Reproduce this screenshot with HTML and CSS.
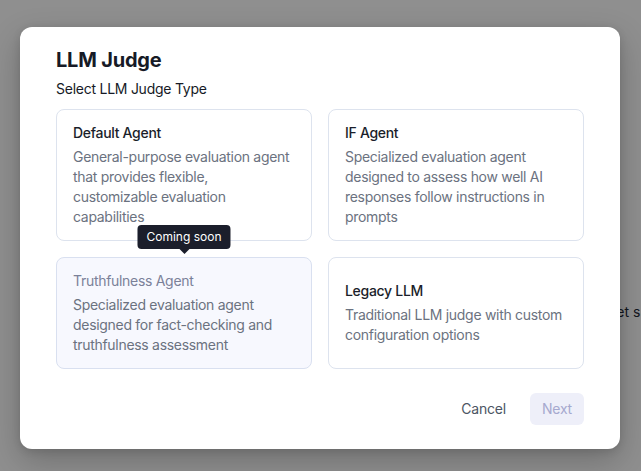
FILE: index.html
```html
<!DOCTYPE html>
<html>
<head>
<meta charset="utf-8">
<link rel="stylesheet" href="styles.css">
</head>
<body>
<div class="page-bg"><span class="bg-text">Reset s</span></div>
<div class="overlay"></div>
<div class="modal">
  <h1 class="modal-title">LLM Judge</h1>
  <p class="modal-sub">Select LLM Judge Type</p>
  <div class="grid">
    <div class="card">
      <div class="card-title">Default Agent</div>
      <div class="card-desc">General-purpose evaluation agent that provides flexible, customizable evaluation capabilities</div>
    </div>
    <div class="card">
      <div class="card-title">IF Agent</div>
      <div class="card-desc">Specialized evaluation agent designed to assess how well AI responses follow instructions in prompts</div>
    </div>
    <div class="card card-disabled">
      <div class="tooltip">Coming soon</div>
      <div class="card-title">Truthfulness Agent</div>
      <div class="card-desc">Specialized evaluation agent designed for fact-checking and truthfulness assessment</div>
    </div>
    <div class="card">
      <div class="card-title">Legacy LLM</div>
      <div class="card-desc">Traditional LLM judge with custom configuration options</div>
    </div>
  </div>
  <div class="footer">
    <button class="btn btn-cancel">Cancel</button>
    <button class="btn btn-next">Next</button>
  </div>
</div>
</body>
</html>
```
FILE: styles.css
```css
html, body {
  margin: 0;
  padding: 0;
  width: 641px;
  height: 471px;
  overflow: hidden;
}
body {
  font-family: "Inter", "Liberation Sans", sans-serif;
  background: #ffffff;
  position: relative;
}
.page-bg {
  position: absolute;
  inset: 0;
}
.bg-text {
  position: absolute;
  left: 592px;
  top: 302px;
  font-size: 14px;
  line-height: 20px;
  color: #1f2937;
}
.overlay {
  position: absolute;
  inset: 0;
  background: rgba(0, 0, 0, 0.44);
}
.modal {
  position: relative;
  z-index: 2;
  box-sizing: border-box;
  width: 600px;
  margin: 27px 0 0 20px;
  padding: 19px 36px 24px;
  background: #ffffff;
  border-radius: 12px;
  box-shadow: 0 12px 32px rgba(0, 0, 0, 0.22), 0 2px 8px rgba(0, 0, 0, 0.12);
}
.modal-title {
  margin: 0;
  font-size: 20px;
  line-height: 28px;
  font-weight: 700;
  color: #161a26;
  letter-spacing: -0.2px;
}
.modal-sub {
  margin: 5px 0 10px;
  font-size: 14px;
  line-height: 20px;
  color: #161a26;
  letter-spacing: -0.25px;
}
.grid {
  display: grid;
  grid-template-columns: 256px 256px;
  gap: 16px;
}
.card {
  position: relative;
  box-sizing: border-box;
  display: flex;
  flex-direction: column;
  justify-content: center;
  padding: 13px 16px;
  border: 1px solid #dde3ee;
  border-radius: 8px;
  background: #ffffff;
  letter-spacing: -0.3px;
}
.card-title {
  font-size: 14px;
  line-height: 20px;
  font-weight: 500;
  color: #1a1e2a;
}
.card-desc {
  margin-top: 4px;
  font-size: 14px;
  line-height: 20px;
  color: #6b7280;
}
.card-disabled {
  background: #f7f8fe;
  border-color: #d9e0f0;
}
.card-disabled .card-title {
  color: #7b8199;
  font-weight: 400;
}
.tooltip {
  position: absolute;
  left: 50%;
  bottom: calc(100% + 9px);
  transform: translateX(-50%);
  padding: 4px 9px;
  font-size: 12px;
  line-height: 16px;
  color: #ffffff;
  background: #1b1e2b;
  border-radius: 4px;
  white-space: nowrap;
  letter-spacing: 0;
}
.tooltip::after {
  content: "";
  position: absolute;
  left: 50%;
  top: 100%;
  margin-left: -5px;
  border-left: 5px solid transparent;
  border-right: 5px solid transparent;
  border-top: 5px solid #1b1e2b;
}
.footer {
  display: flex;
  justify-content: flex-end;
  gap: 12px;
  margin-top: 24px;
}
.btn {
  font-family: inherit;
  font-size: 14px;
  line-height: 20px;
  padding: 6px 12px;
  border: none;
  border-radius: 6px;
  background: transparent;
  cursor: pointer;
  letter-spacing: -0.2px;
}
.btn-cancel {
  color: #4b5563;
}
.btn-next {
  background: #eeeff9;
  color: #a6a9cf;
  font-weight: 400;
}
```
